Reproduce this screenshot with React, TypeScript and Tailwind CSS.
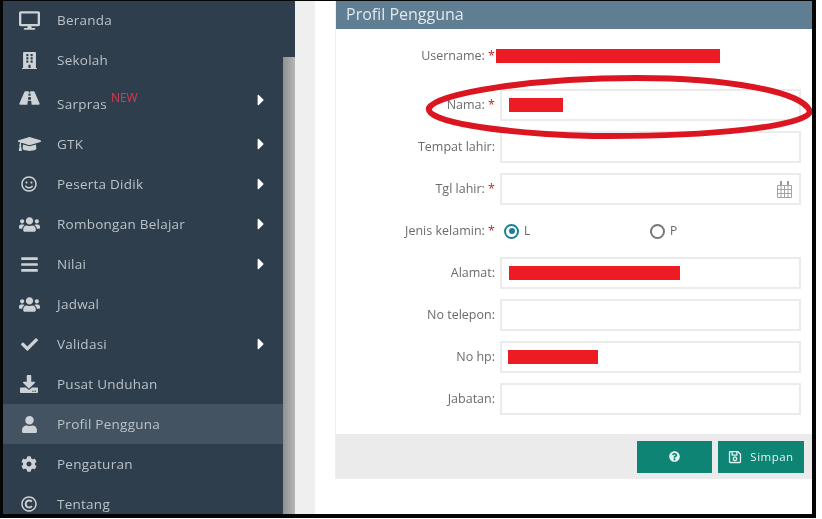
import type { ReactNode } from 'react';
import type { IconType } from 'react-icons';
import {
  FaBars,
  FaBuilding,
  FaCaretRight,
  FaCheck,
  FaCog,
  FaDesktop,
  FaDownload,
  FaGraduationCap,
  FaQuestionCircle,
  FaRegCopyright,
  FaRegSave,
  FaRegSmile,
  FaRoad,
  FaUser,
  FaUsers,
} from 'react-icons/fa';

interface MenuItem {
  label: string;
  icon: IconType;
  iconClass: string;
  arrow?: boolean;
  isNew?: boolean;
  active?: boolean;
}

const MENU: MenuItem[] = [
  { label: 'Beranda', icon: FaDesktop, iconClass: 'w-[21px] h-[21px]' },
  { label: 'Sekolah', icon: FaBuilding, iconClass: 'w-[15px] h-[19px]' },
  { label: 'Sarpras', icon: FaRoad, iconClass: 'w-[21px] h-[18px] -mt-2', arrow: true, isNew: true },
  { label: 'GTK', icon: FaGraduationCap, iconClass: 'w-[23px] h-[20px]', arrow: true },
  { label: 'Peserta Didik', icon: FaRegSmile, iconClass: 'w-[16px] h-[16px]', arrow: true },
  { label: 'Rombongan Belajar', icon: FaUsers, iconClass: 'w-[21px] h-[21px]', arrow: true },
  { label: 'Nilai', icon: FaBars, iconClass: 'w-[19px] h-[19px]', arrow: true },
  { label: 'Jadwal', icon: FaUsers, iconClass: 'w-[21px] h-[21px]' },
  { label: 'Validasi', icon: FaCheck, iconClass: 'w-[17px] h-[17px]', arrow: true },
  { label: 'Pusat Unduhan', icon: FaDownload, iconClass: 'w-[18px] h-[18px]' },
  { label: 'Profil Pengguna', icon: FaUser, iconClass: 'w-[15px] h-[17px]', active: true },
  { label: 'Pengaturan', icon: FaCog, iconClass: 'w-[16px] h-[16px]' },
  { label: 'Tentang', icon: FaRegCopyright, iconClass: 'w-[16px] h-[16px]' },
];

const SidebarRow = ({ item }: { item: MenuItem }) => {
  const Icon = item.icon;
  return (
    <div
      className={`shrink-0 flex items-center text-[13.5px] text-[#b9c1c8] ${item.isNew ? 'h-[44px]' : 'h-10'} ${item.active ? 'bg-[#445362]' : ''}`}
    >
      <div className="w-[54px] shrink-0 flex justify-center pr-[2px]">
        <Icon className={`${item.iconClass} text-[#cdd2d6]`} />
      </div>
      <span className={`tracking-[0.25px] ${item.isNew ? 'mt-1' : ''}`}>{item.label}</span>
      {item.isNew && (
        <span className="text-[12px] leading-none text-[#d9394f] ml-[4px] -mt-[9px]">NEW</span>
      )}
      {item.arrow && (
        <FaCaretRight
          className={`ml-auto mr-[18px] w-[8px] h-[18px] text-white ${item.isNew ? '-mt-1' : ''}`}
        />
      )}
    </div>
  );
};

const Sidebar = () => (
  <aside className="w-[292px] shrink-0 flex bg-[#2f3e4c] overflow-hidden">
    <nav className="w-[280px] flex flex-col -mt-px">
      {MENU.map((item) => (
        <SidebarRow key={item.label} item={item} />
      ))}
    </nav>
    <div className="flex-1 pt-[56px]">
      <div className="h-full bg-gradient-to-r from-[#8f9192] to-[#b5b5b5]" />
    </div>
  </aside>
);

const Redacted = ({ className }: { className: string }) => (
  <div className={`h-[14px] bg-[#ed1c24] ${className}`} />
);

interface FieldProps {
  label: string;
  required?: boolean;
  children?: ReactNode;
}

const Label = ({ label, required }: { label: string; required?: boolean }) => (
  <div className="w-[164px] shrink-0 text-right text-[12.5px] text-[#6b6b6b] pr-[5px]">
    {label}
    {required && <span className="text-[#c0272d]"> *</span>}
  </div>
);

const Field = ({ label, required, children }: FieldProps) => (
  <div className="flex items-center">
    <Label label={label} required={required} />
    <div className="w-[301px] h-[32px] border-2 border-[#ebebeb] bg-white flex items-center pl-[6px] pr-[7px]">
      {children}
    </div>
  </div>
);

const Radio = ({ label, checked }: { label: string; checked?: boolean }) => (
  <div className="flex items-center gap-[5px] text-[12px] text-[#666]">
    <span
      className={`w-[15px] h-[15px] rounded-full border-2 flex items-center justify-center ${checked ? 'border-[#1d7f96]' : 'border-[#777]'}`}
    >
      {checked && <span className="w-[6px] h-[6px] rounded-full bg-[#1d7f96]" />}
    </span>
    {label}
  </div>
);

const CalendarIcon = () => (
  <svg className="ml-auto w-[15px] h-[18px] text-[#9a9a9a]" viewBox="0 0 15 18" fill="none" stroke="currentColor">
    <path d="M.5 5.5h14v12H.5zM.5 9.5h14M.5 13.5h14M4 5.5v12M7.5 5.5v12M11 5.5v12" strokeWidth="0.9" />
    <path d="M4 1v4M11 1v4" strokeWidth="2" />
  </svg>
);

const ProfileForm = () => (
  <section className="w-[477px] flex flex-col border-l border-[#eeeeee]">
    <header className="h-[28px] bg-[#5f7d93] text-[#e3e8ec] text-[16px] pl-[10px] pb-[2px] flex items-center">
      Profil Pengguna
    </header>
    <div className="flex flex-col gap-[10px] pt-[18px]">
      <div className="flex items-center h-[18px]">
        <Label label="Username:" required />
        <div className="w-[224px] h-[14px] bg-[#ed1c24] -ml-[4px]" />
      </div>
      <div className="mt-[14px]">
        <Field label="Nama:" required>
          <Redacted className="w-[54px] ml-[1px]" />
        </Field>
      </div>
      <Field label="Tempat lahir:" />
      <Field label="Tgl lahir:" required>
        <CalendarIcon />
      </Field>
      <div className="flex items-center h-[32px]">
        <Label label="Jenis kelamin:" required />
        <div className="flex items-center pl-[4px]">
          <div className="w-[146px]">
            <Radio label="L" checked />
          </div>
          <Radio label="P" />
        </div>
      </div>
      <Field label="Alamat:">
        <Redacted className="w-[171px] ml-[1px]" />
      </Field>
      <Field label="No telepon:" />
      <Field label="No hp:">
        <Redacted className="w-[90px]" />
      </Field>
      <Field label="Jabatan:" />
    </div>
    <footer className="mt-[19px] h-[45px] bg-[#ebebeb] flex items-center justify-end gap-[6px] pr-[8px] text-[#e6f2f0]">
      <button className="w-[75px] h-[32px] bg-[#0e8475] flex items-center justify-center">
        <FaQuestionCircle className="w-[11px] h-[11px]" />
      </button>
      <button className="w-[86px] h-[32px] bg-[#0e8475] flex items-center justify-center gap-[8px] text-[11.5px] tracking-[0.5px]">
        <FaRegSave className="w-[14px] h-[14px]" />
        Simpan
      </button>
    </footer>
  </section>
);

export default function App() {
  return (
    <div className="w-[822px] h-[519px] bg-white overflow-hidden font-['Open_Sans',sans-serif]">
      <div className="relative w-[816px] h-[518px] box-border border-l-[3px] border-t border-r-4 border-b-4 border-[#050505] flex overflow-hidden blur-[0.6px]">
        <Sidebar />
        <div className="w-[20px] shrink-0 bg-[#efefef]" />
        <div className="flex-1 pl-[20px] bg-white">
          <ProfileForm />
        </div>
        <svg
          className="absolute left-[420px] top-[70px] w-[393px] h-[76px] pointer-events-none"
          viewBox="0 0 393 76"
          fill="none"
        >
          <path
            d="M6 37 C14 22 110 7 214 7 C300 7 382 20 387 41 C382 55 290 66 170 65 C70 62 2 50 6 37 Z"
            stroke="#dc1620"
            strokeWidth="6"
          />
        </svg>
      </div>
    </div>
  );
}
